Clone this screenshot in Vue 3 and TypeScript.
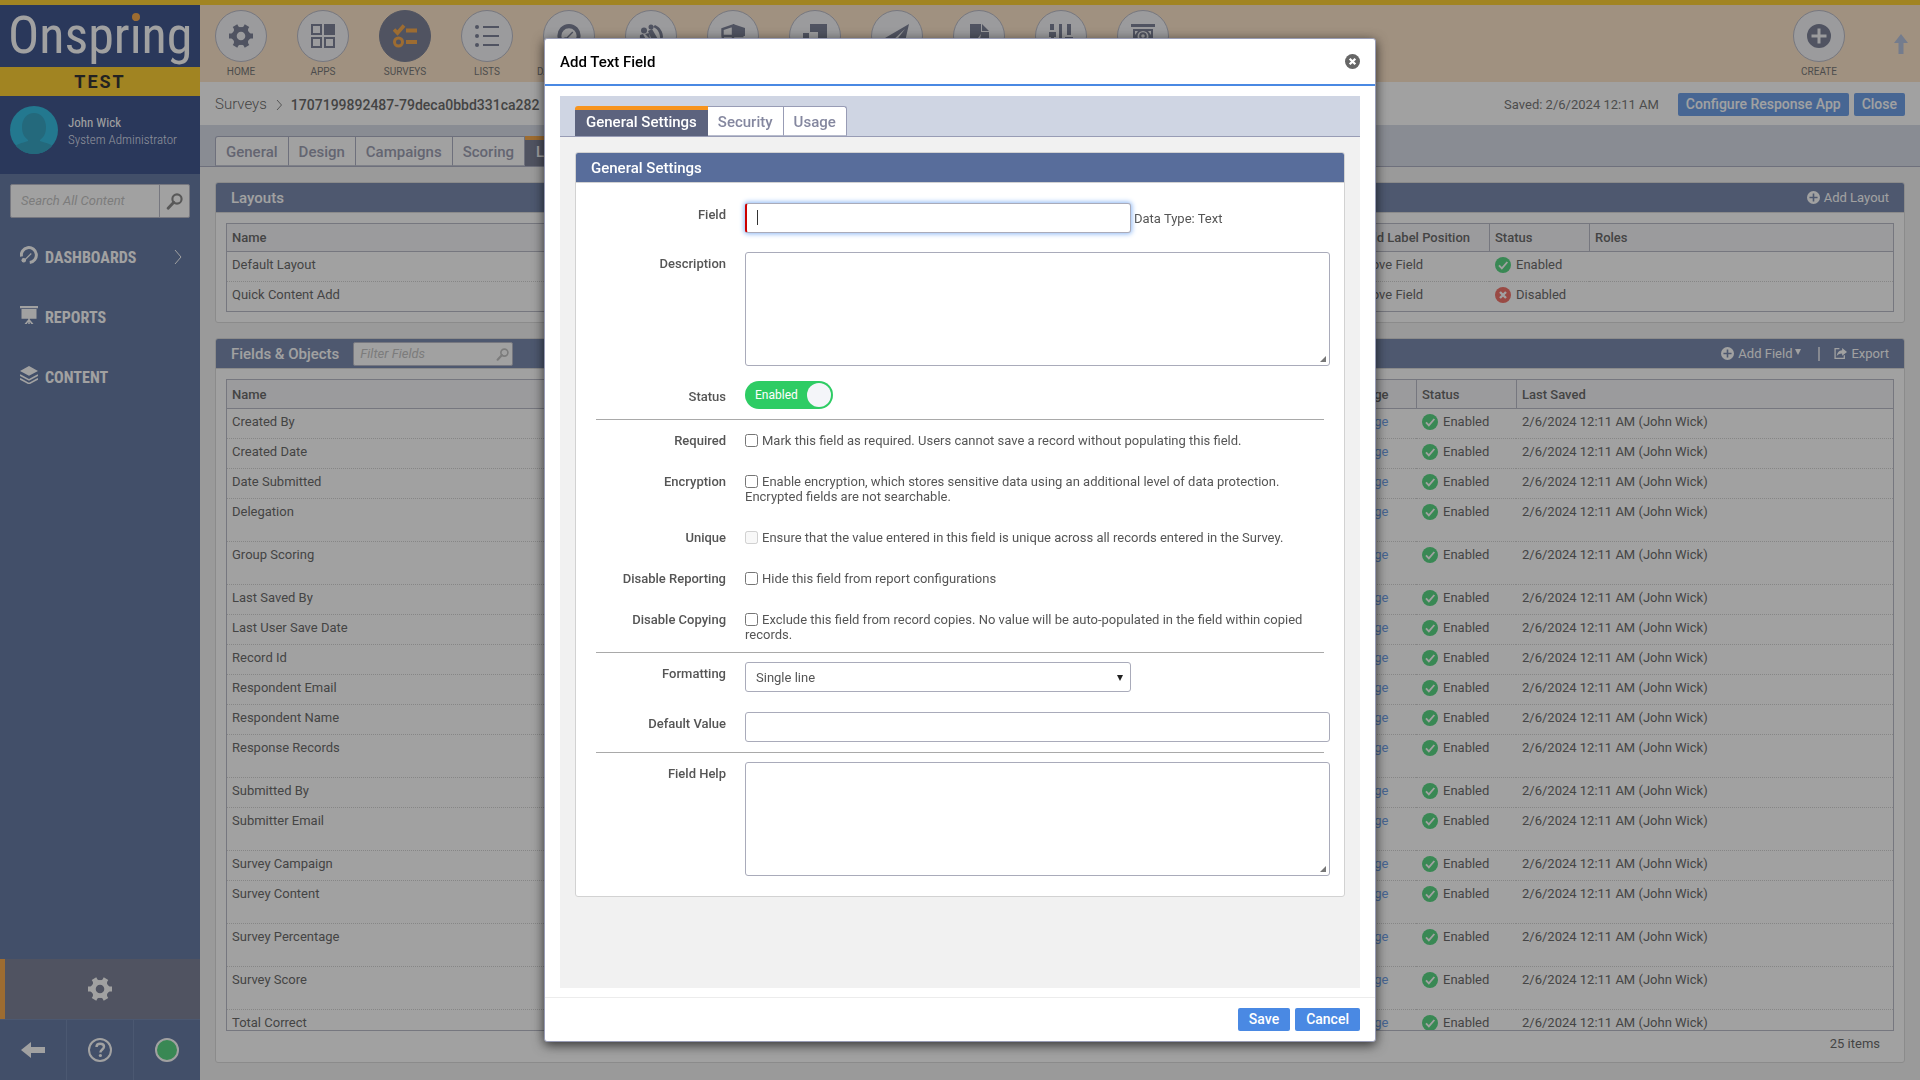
<script setup lang="ts">
import { ref } from 'vue'

interface NavItem { label: string; icon: string; active?: boolean }
interface FieldRow { name: string; tall?: boolean }
interface CheckRow { id: string; label: string; text: string; disabled?: boolean }

const tooth = (deg: number) => `<path transform="rotate(${deg} 12 12)" d="M18.5 7.6 21.6 9.4H24V14.6H21.6L18.5 16.4Z"/>`
const gear = [0, 60, 120, 180, 240, 300].map(tooth).join('') +
  '<circle cx="12" cy="12" r="6.6" fill="none" stroke="currentColor" stroke-width="4.6"/>'
const gauge = '<path d="M5.2 21A11.6 11.6 0 1 1 18.800 21L16.600 18A7.600 7.600 0 1 0 7.400 18Z"/><path d="M9 15 15.800 8" stroke="currentColor" stroke-width="1.400"/><circle cx="8.500" cy="15.500" r="2.200"/>'
const smallGauge = '<path d="M2 14A10 10 0 1 1 13 22" fill="none" stroke="currentColor" stroke-width="4"/><path d="M4 21 15 10" stroke="currentColor" stroke-width="1.600"/><circle cx="5" cy="19" r="3"/>'
const stand = '<path d="M0 0H24V3H0ZM2 4H22V17H13V18L18 24H15L13 21V24H11V21L9 24H6L11 18V17H2Z"/>'
const plus = '<path fill-rule="evenodd" d="M12 0A12 12 0 1 0 12 24A12 12 0 1 0 12 0ZM10.500 4.500H13.500V10.500H19.500V13.500H13.500V19.500H10.500V13.500H4.500V10.500H10.500Z"/>'
const lens = '<circle cx="15.500" cy="8.500" r="6.500" fill="none" stroke="currentColor" stroke-width="3"/><path d="M11 13 3 21.500" stroke="currentColor" stroke-width="4" stroke-linecap="round"/>'
const check = '<circle cx="12" cy="12" r="12"/><path d="M6 12.500 10.300 17 18.500 7.500" fill="none" stroke="#fff" stroke-width="2.800"/>'
const cross = '<circle cx="12" cy="12" r="12"/><path d="M7.500 7.500 16.500 16.500M16.500 7.500 7.500 16.500" stroke="#fff" stroke-width="3.600"/>'

const nav: NavItem[] = [
  { label: 'HOME', icon: gear },
  { label: 'APPS', icon: '<path fill-rule="evenodd" d="M0 0H11V11H0ZM2 2V9H9V2ZM13 0H24V11H13ZM0 13H11V24H0ZM2 15V22H9V15ZM13 13H24V24H13ZM15 15V22H22V15Z"/>' },
  { label: 'SURVEYS', icon: '<path d="M1 5.500 4.500 9 11 1.500" fill="none" stroke="currentColor" stroke-width="3.600"/><path d="M13 4.500H24V8.500H13ZM13 16H24V20H13Z"/><circle cx="5.500" cy="18" r="4" fill="none" stroke="currentColor" stroke-width="3"/>', active: true },
  { label: 'LISTS', icon: '<circle cx="2" cy="3" r="2"/><circle cx="2" cy="12" r="2"/><circle cx="2" cy="21" r="2"/><path d="M8 2H24V4H8ZM8 11H24V13H8ZM8 20H24V22H8Z"/>' },
  { label: 'DASHBOARDS', icon: gauge },
  { label: '', icon: '<circle cx="5" cy="6.500" r="3"/><circle cx="12" cy="3" r="2.500"/><path d="M16 1C21 3 24 8 24 13L21 20C22 11 20 5 14 3ZM9 7 13 5 20 17 17 22 12 14ZM1 11 4 10 11 23C4 22 0 17 1 11ZM6 10 10 9 11 15Z"/>' },
  { label: '', icon: '<path d="M12 0 24 4V12H12V0Z"/><path d="M1.500 12V5L12 1.500V22C6 20 1.500 17 1.500 12ZM1.500 12H22.500" fill="none" stroke="currentColor" stroke-width="2.400"/>' },
  { label: '', icon: '<path d="M7 0H24V17H15V8H7ZM0 9H6V17H13V24H0Z"/>' },
  { label: '', icon: '<path d="M24 0 0 14 7 17 20 5 10 18V24L14 20 19 22Z"/>' },
  { label: '', icon: '<path fill-rule="evenodd" d="M3 0H14V8H22V24H3ZM15 0 22 7H15ZM14 10 8 18H12L10 23 17 15H13Z"/>' },
  { label: '', icon: '<path d="M1 0H5V6H1ZM0 8H7V13H5V24H2V13H0ZM10 0H13V15H10ZM18 0H22V11H18ZM16 13H24V17H22V24H18V17H16Z"/>' },
  { label: '', icon: '<path fill-rule="evenodd" d="M0 0H24V3H0ZM2 5H22V21H2ZM4 7V11L7 7ZM20 7V11L17 7ZM12 7A5.500 5.500 0 1 0 12 18A5.500 5.500 0 1 0 12 7Z"/><circle cx="12" cy="12" r="2.800" fill="none" stroke="currentColor" stroke-width="2"/>' },
]

const menu = [
  { label: 'DASHBOARDS', icon: smallGauge, more: true },
  { label: 'REPORTS', icon: stand, more: false },
  { label: 'CONTENT', icon: '<path d="M12 0 24 6.500 12 13 0 6.500Z"/><path d="M0 12 12 18.500 24 12M0 17 12 23.500 24 17" fill="none" stroke="currentColor" stroke-width="2.200"/>', more: false },
]

const pageTabs = ['General', 'Design', 'Campaigns', 'Scoring', 'Layout']
const layouts = [
  { name: 'Default Layout', on: true },
  { name: 'Quick Content Add', on: false },
]
const fields: FieldRow[] = [
  { name: 'Created By' },
  { name: 'Created Date' },
  { name: 'Date Submitted' },
  { name: 'Delegation', tall: true },
  { name: 'Group Scoring', tall: true },
  { name: 'Last Saved By' },
  { name: 'Last User Save Date' },
  { name: 'Record Id' },
  { name: 'Respondent Email' },
  { name: 'Respondent Name' },
  { name: 'Response Records', tall: true },
  { name: 'Submitted By' },
  { name: 'Submitter Email', tall: true },
  { name: 'Survey Campaign' },
  { name: 'Survey Content', tall: true },
  { name: 'Survey Percentage', tall: true },
  { name: 'Survey Score', tall: true },
  { name: 'Total Correct', tall: true },
]
const checks: CheckRow[] = [
  { id: 'required', label: 'Required', text: 'Mark this field as required. Users cannot save a record without populating this field.' },
  { id: 'encryption', label: 'Encryption', text: 'Enable encryption, which stores sensitive data using an additional level of data protection. Encrypted fields are not searchable.' },
  { id: 'unique', label: 'Unique', text: 'Ensure that the value entered in this field is unique across all records entered in the Survey.', disabled: true },
  { id: 'reporting', label: 'Disable Reporting', text: 'Hide this field from report configurations' },
  { id: 'copying', label: 'Disable Copying', text: 'Exclude this field from record copies. No value will be auto-populated in the field within copied records.' },
]
const modalTabs = ['General Settings', 'Security', 'Usage']
const activeTab = ref('General Settings')
const enabled = ref(true)
</script>

<template>
  <div class="app">
    <div class="strip"></div>
    <div class="shell">
      <aside class="sidebar">
        <div class="logo">Onspr<span class="dot-i">i</span>ng</div>
        <div class="env">TEST</div>
        <div class="user">
          <svg class="avatar" viewBox="0 0 48 48" aria-hidden="true">
            <defs><clipPath id="face"><circle cx="24" cy="24" r="24" /></clipPath></defs>
            <g clip-path="url(#face)">
              <rect width="48" height="48" fill="#02acda" />
              <path fill="#048eb4" d="M24 7c7 0 12 6 12 14 0 6-2 10-6 13v1c6 2 12 3 14 7v8H4v-8c2-4 8-5 14-7v-1c-4-3-6-7-6-13C12 13 17 7 24 7Z" />
            </g>
          </svg>
          <div>
            <div class="user-name">John Wick</div>
            <div class="user-role">System Administrator</div>
          </div>
        </div>
        <div class="search">
          <input type="text" placeholder="Search All Content" aria-label="Search all content" />
          <button type="button" aria-label="Search"><svg viewBox="0 0 24 24" v-html="lens"></svg></button>
        </div>
        <nav class="menu">
          <a v-for="m in menu" :key="m.label" href="#">
            <svg class="menu-icon" viewBox="0 0 24 24" v-html="m.icon"></svg>
            <span>{{ m.label }}</span>
            <svg v-if="m.more" class="chev" viewBox="0 0 8 16"><path d="M1 1 7 8 1 15" /></svg>
          </a>
        </nav>
        <button type="button" class="admin" aria-label="Administration"><svg viewBox="0 0 24 24" v-html="gear"></svg></button>
        <div class="tools">
          <button type="button" aria-label="Collapse"><svg viewBox="0 0 24 24"><path d="M0 12 10 4V9H24V15H10V20Z" /></svg></button>
          <button type="button" aria-label="Help"><svg viewBox="0 0 24 24"><circle cx="12" cy="12" r="11" fill="none" stroke="currentColor" stroke-width="2" /><path d="M8.500 9C8.500 7 10 5.800 12.200 5.800S16 7 16 8.800C16 11.400 12.400 11.600 12.400 14.500" fill="none" stroke="currentColor" stroke-width="2.400" /><circle cx="12.400" cy="17.500" r="1.600" /></svg></button>
          <button type="button" aria-label="Status"><svg viewBox="0 0 24 24"><circle cx="12" cy="12" r="11" fill="#2ecc64" stroke="currentColor" stroke-width="2" /></svg></button>
        </div>
      </aside>

      <div class="main">
        <header class="topnav">
          <a v-for="(n, i) in nav" :key="i" href="#" class="nav-item">
            <span class="circle" :class="{ on: n.active }"><svg viewBox="0 0 24 24" v-html="n.icon"></svg></span>
            <span class="nav-label">{{ n.label }}</span>
          </a>
          <a href="#" class="nav-item create">
            <span class="circle"><svg viewBox="0 0 24 24" v-html="plus"></svg></span>
            <span class="nav-label">CREATE</span>
          </a>
          <svg class="pin" viewBox="0 0 14 20"><path d="M7 0 14 9H9.500V20H4.500V9H0Z" /></svg>
        </header>

        <div class="crumbs">
          <a href="#">Surveys</a>
          <svg class="crumb-sep" viewBox="0 0 6 10"><path d="M1 0 5.500 5 1 10" /></svg>
          <h1>1707199892487-79deca0bbd331ca282</h1>
          <span class="saved">Saved: 2/6/2024 12:11 AM</span>
          <button type="button" class="btn">Configure Response App</button>
          <button type="button" class="btn">Close</button>
        </div>

        <div class="tabbar page-tabs">
          <button v-for="t in pageTabs" :key="t" type="button" :class="{ on: t === 'Layout' }">{{ t }}</button>
        </div>

        <div class="content">
          <section class="panel">
            <div class="panel-head">
              <h2>Layouts</h2>
              <button type="button" class="action push"><svg viewBox="0 0 24 24" v-html="plus"></svg>Add Layout</button>
            </div>
            <div class="panel-body">
              <table class="grid layouts">
                <colgroup><col /><col class="c-label" /><col class="c-status" /><col class="c-roles" /></colgroup>
                <thead><tr><th>Name</th><th>Field Label Position</th><th>Status</th><th>Roles</th></tr></thead>
                <tbody>
                  <tr v-for="l in layouts" :key="l.name">
                    <td>{{ l.name }}</td>
                    <td>Above Field</td>
                    <td><span class="state"><svg :class="l.on ? 'ok' : 'bad'" viewBox="0 0 24 24" v-html="l.on ? check : cross"></svg>{{ l.on ? 'Enabled' : 'Disabled' }}</span></td>
                    <td></td>
                  </tr>
                </tbody>
              </table>
            </div>
          </section>

          <section class="panel grow">
            <div class="panel-head">
              <h2>Fields &amp; Objects</h2>
              <label class="filter">
                <input type="text" placeholder="Filter Fields" aria-label="Filter fields" />
                <svg viewBox="0 0 24 24" v-html="lens"></svg>
              </label>
              <button type="button" class="action push"><svg viewBox="0 0 24 24" v-html="plus"></svg>Add Field<svg class="caret-down" viewBox="0 0 6 6"><path d="M0 0H6L3 6Z" /></svg></button>
              <span class="bar"></span>
              <button type="button" class="action"><svg viewBox="0 0 24 24"><path d="M10 3H2V21H19V15" fill="none" stroke="currentColor" stroke-width="2.400" /><path d="M15 2 24 9 15 16V12C10 12 7 14 5 17 6 10 9 7 15 6Z" /></svg>Export</button>
            </div>
            <div class="panel-body fill">
              <div class="scroller">
                <table class="grid fields">
                  <colgroup><col /><col class="c-usage" /><col class="c-fstatus" /><col class="c-saved" /></colgroup>
                  <thead><tr><th>Name</th><th>Usage</th><th>Status</th><th>Last Saved</th></tr></thead>
                  <tbody>
                    <tr v-for="f in fields" :key="f.name" :class="{ tall: f.tall }">
                      <td>{{ f.name }}</td>
                      <td><a href="#">Usage</a></td>
                      <td><span class="state"><svg class="ok" viewBox="0 0 24 24" v-html="check"></svg>Enabled</span></td>
                      <td>2/6/2024 12:11 AM (John Wick)</td>
                    </tr>
                  </tbody>
                </table>
              </div>
              <div class="count">25 items</div>
            </div>
          </section>
        </div>
      </div>
    </div>

    <div class="overlay">
      <div class="modal" role="dialog" aria-labelledby="dlg-title">
        <div class="modal-head">
          <h2 id="dlg-title">Add Text Field</h2>
          <button type="button" class="x" aria-label="Close dialog"><svg viewBox="0 0 24 24" v-html="cross"></svg></button>
        </div>
        <div class="modal-body">
          <div class="tabbar">
            <button v-for="t in modalTabs" :key="t" type="button" :class="{ on: t === activeTab }" @click="activeTab = t">{{ t }}</button>
          </div>
          <section class="panel form">
            <div class="panel-head"><h2>General Settings</h2></div>
            <div class="group first">
              <div class="row">
                <label class="name" for="field">Field</label>
                <div class="control inline">
                  <span class="focus-wrap half"><input id="field" class="text req" type="text" /><span class="caret"></span></span>
                  <span class="hint">Data Type: Text</span>
                </div>
              </div>
              <div class="row">
                <label class="name" for="desc">Description</label>
                <div class="control area"><textarea id="desc"></textarea><svg class="grip" viewBox="0 0 6 6"><path d="M6 0V6H0Z" /></svg></div>
              </div>
              <div class="row snug">
                <label class="name mid" for="status">Status</label>
                <div class="control">
                  <label class="toggle"><input id="status" v-model="enabled" type="checkbox" /><span>Enabled</span><i></i></label>
                </div>
              </div>
            </div>
            <hr />
            <div class="group checks">
              <div v-for="c in checks" :key="c.id" class="row">
                <label class="name flat" :for="c.id">{{ c.label }}</label>
                <div class="control"><input :id="c.id" class="box" type="checkbox" :disabled="c.disabled" />{{ c.text }}</div>
              </div>
            </div>
            <hr />
            <div class="group">
              <div class="row">
                <label class="name" for="fmt">Formatting</label>
                <div class="control">
                  <span class="select half"><select id="fmt"><option>Single line</option></select><svg viewBox="0 0 6 6"><path d="M0 0H6L3 6Z" /></svg></span>
                </div>
              </div>
              <div class="row">
                <label class="name" for="def">Default Value</label>
                <div class="control"><input id="def" class="text" type="text" /></div>
              </div>
            </div>
            <hr />
            <div class="group last">
              <div class="row">
                <label class="name" for="help">Field Help</label>
                <div class="control area"><textarea id="help"></textarea><svg class="grip" viewBox="0 0 6 6"><path d="M6 0V6H0Z" /></svg></div>
              </div>
            </div>
          </section>
        </div>
        <div class="modal-foot">
          <button type="button" class="btn">Save</button>
          <button type="button" class="btn">Cancel</button>
        </div>
      </div>
    </div>
  </div>
</template>

<style>
body { background: #f1f1f1; }
</style>

<style scoped>
.app, .app * { box-sizing: border-box; }
.app { height: 100vh; display: flex; flex-direction: column; overflow: hidden; font: 13px/15px Roboto, sans-serif; color: #444; }
button, input, textarea, select { font: inherit; color: inherit; margin: 0; }
button { border: 0; background: none; padding: 0; cursor: pointer; }
a { color: inherit; text-decoration: none; }
h1, h2 { margin: 0; font-size: 15px; font-weight: 500; line-height: 18px; }
svg { display: block; fill: currentColor; }

.strip { height: 5px; background: #ffc400; flex: none; }
.shell { flex: 1; min-height: 0; display: flex; }

.sidebar { width: 200px; flex: none; display: flex; flex-direction: column; background: #405a8e; color: #fff; font-family: 'Roboto Condensed', Roboto, sans-serif; }
.logo { height: 62px; padding-left: 8px; background: #102c72; font-size: 52px; line-height: 62px; }
.dot-i { position: relative; }
.dot-i::before { content: ''; position: absolute; left: 2px; top: 8px; width: 8px; height: 8px; border-radius: 50%; background: #f7941e; }
.env { height: 29px; background: #ffc400; color: #000; font: 700 18px/29px Roboto, sans-serif; letter-spacing: 2px; text-align: center; }
.user { height: 78px; padding: 10px; background: #102c72; display: flex; gap: 10px; }
.avatar { width: 48px; height: 48px; }
.user-name { margin-top: 8px; line-height: 17px; }
.user-role { line-height: 17px; font-weight: 300; color: #d8dfee; }
.search { height: 34px; margin: 10px 10px 9px; display: flex; background: #fff; border: 1px solid #a9abba; border-radius: 2px; }
.search input { flex: 1; min-width: 0; border: 0; background: none; padding: 0 10px; font: italic 400 13px/16px Roboto, sans-serif; outline: 0; }
input::placeholder { color: #b4b4b4; opacity: 1; font-style: italic; }
.search button { width: 30px; border-left: 1px solid #a9abba; display: grid; place-items: center; color: #6d6d6d; }
.search svg { width: 17px; height: 17px; }
.menu a { height: 60px; padding: 0 18px 0 20px; display: flex; align-items: center; gap: 7px; font-size: 16px; font-weight: 700; }
.menu-icon { width: 18px; height: 18px; margin-bottom: 4px; }
.menu .chev { width: 8px; height: 16px; margin-left: auto; fill: none; stroke: currentColor; }
.admin { height: 60px; margin-top: auto; border-left: 5px solid #f7941e; padding-right: 5px; background: #5c637e; display: grid; place-items: center; }
.sidebar .admin svg, .tools svg { width: 24px; height: 24px; }
.tools { height: 61px; display: flex; border-top: 1px solid #526d9f; }
.tools button { flex: 1; display: grid; place-items: center; }
.tools button + button { border-left: 1px solid #526d9f; }

.main { flex: 1; min-width: 0; display: flex; flex-direction: column; background: #f1f1f1; }
.topnav { height: 77px; flex: none; display: flex; gap: 30px; padding: 5px 12px 0 15px; background: #fcdebc; }
.nav-item { width: 52px; display: flex; flex-direction: column; align-items: center; }
.circle { width: 52px; height: 52px; flex: none; border-radius: 50%; border: 1px solid #a9abba; background: #f2f2f6; color: #5c637e; display: grid; place-items: center; }
.circle.on { background: #5c637e; border-color: #5c637e; color: #f7941e; }
.circle svg { width: 24px; height: 24px; }
.nav-label { font-size: 10px; line-height: 20px; color: #555; }
.create { margin-left: auto; }
.pin { width: 14px; height: 20px; margin: 24px 0 0 19px; color: #a4b4d6; }
.crumbs { height: 43px; flex: none; display: flex; align-items: center; padding: 2px 15px 0; background: #fff; font-size: 14px; }
.crumbs > a { font-size: 15px; font-weight: 300; }
.crumb-sep { width: 6px; height: 10px; margin: 0 9px; fill: none; stroke: #666; }
.crumbs h1 { font-size: 14px; }
.saved { margin-left: auto; margin-right: 19px; font-size: 13px; color: #555; }
.btn { height: 23px; padding: 0 11px; border-radius: 2px; background: #4a89e3; color: #fff; font-size: 14px; font-weight: 500; }
.btn + .btn { margin-left: 5px; }
.crumbs .btn { padding: 0 8px; }

.tabbar { flex: none; display: flex; padding: 10px 15px 0; background: #cfd5e3; border-bottom: 1px solid #989cb5; }
.tabbar button { height: 30px; padding: 3px 10px 0; background: #fff; border: 1px solid #989cb5; border-left-width: 0; border-bottom-color: #b8bccd; color: #84879f; font-size: 15px; font-weight: 500; }
.tabbar button:first-child { border-left-width: 1px; border-top-left-radius: 3px; }
.tabbar button:last-child { border-top-right-radius: 3px; }
.tabbar button.on { background: #5c637e; color: #fff; border: 0; border-top: 4px solid #f7941e; padding: 0 11px 1px; }
.page-tabs { padding-top: 11px; }

.content { flex: 1; min-height: 0; display: flex; flex-direction: column; gap: 15px; padding: 15px 15px 17px; }
.panel { background: #fff; border: 1px solid #d2d2d2; border-radius: 3px; }
.panel-head { height: 30px; padding: 0 15px; display: flex; align-items: center; background: #586d9b; color: #fff; border-bottom: 1px solid #d2d2d2; border-radius: 2px 2px 0 0; }
.panel-body { padding: 10px; }
.push { margin-left: auto; }
.action { display: flex; align-items: center; gap: 4px; }
.action svg { width: 13px; height: 13px; }
.action .caret-down { width: 6px; height: 6px; margin: 0 0 3px -1px; }
.bar { width: 2px; height: 14px; margin: 0 14px 0 17px; background: #c8cede; }
.filter { position: relative; margin-left: 14px; }
.filter input { display: block; width: 160px; height: 24px; padding: 0 6px; background: #fff; border: 1px solid #a9abba; border-radius: 2px; font-style: italic; outline: 0; }
.filter svg { position: absolute; right: 4px; top: 6px; width: 13px; height: 13px; color: #b4b4b4; }
.grow { flex: 1; min-height: 0; display: flex; flex-direction: column; }
.fill { flex: 1; min-height: 0; display: flex; flex-direction: column; }
.scroller { flex: 1; min-height: 0; overflow: hidden; border: 1px solid #a9abba; }
.count { padding: 5px 14px 0 0; text-align: right; font-size: 13px; line-height: 16px; }
.grid { width: 100%; table-layout: fixed; border-collapse: separate; border-spacing: 0; }
.layouts { border: 1px solid #a9abba; }
.layouts .c-label { width: 139px; }
.layouts .c-status { width: 100px; }
.layouts .c-roles { width: 304px; }
.c-usage { width: 70px; }
.c-fstatus { width: 100px; }
.c-saved { width: 377px; }
.grid th { height: 28px; padding: 0 5px; text-align: left; font-weight: 500; background: #f2f2f6; border-bottom: 1px solid #a9abba; }
.grid.fields th { height: 29px; }
.grid th + th { border-left: 1px solid #a9abba; }
.grid td { height: 30px; padding: 5px 6px 0; vertical-align: top; border-bottom: 1px dotted #c8c8c8; }
.grid td:first-child { padding-left: 5px; }
.grid .tall td { height: 43px; }
.layouts tr:last-child td { border-bottom: 0; height: 29px; }
.grid a { color: #4a89e3; }
.state { display: flex; align-items: center; gap: 5px; line-height: 16px; }
.state svg { width: 16px; height: 16px; }
.ok { color: #2ecc64; }
.bad { color: #ef5044; }

.overlay { position: fixed; inset: 0; background: rgba(68, 68, 68, 0.5); display: flex; justify-content: center; padding: 38px 16px; }
.modal { width: 832px; display: flex; flex-direction: column; background: #fff; border: 1px solid #989cb5; border-radius: 3px; box-shadow: 0 3px 12px rgba(0, 0, 0, 0.7); color: #555; }
.modal-head { height: 47px; flex: none; padding: 0 15px; display: flex; align-items: center; justify-content: space-between; border-bottom: 2px solid #4a89e3; color: #000; }
.x { color: #666; }
.x svg { width: 15px; height: 15px; }
.modal-body { flex: 1; min-height: 0; margin: 10px 15px 9px; background: #f1f1f1; overflow: hidden; }
.modal-foot { height: 44px; flex: none; display: flex; justify-content: flex-end; align-items: center; padding: 0 15px; border-top: 1px solid #ececec; }
.form { margin: 15px; }
.group { padding: 9px 14px 10px 15px; display: flex; flex-direction: column; gap: 20px; }
.first { padding-top: 20px; gap: 19px; }
.checks { padding-top: 13px; gap: 26px; }
.last { padding-bottom: 20px; }
.row { display: flex; gap: 19px; }
.snug { margin-top: -4px; }
.name { width: 135px; flex: none; padding-top: 4px; text-align: right; font-weight: 500; }
.name.flat { padding-top: 0; }
.name.mid { padding-top: 8px; }
.control { flex: 1; min-width: 0; position: relative; }
.inline { display: flex; align-items: center; gap: 3px; }
.half { width: 386px; }
.text, textarea, select { display: block; width: 100%; height: 30px; padding: 0 10px; background: #fff; border: 1px solid #a9abba; border-radius: 3px; outline: 0; }
textarea { height: 114px; resize: none; }
.focus-wrap { position: relative; }
.req { border-left: 2px solid #cc0000; box-shadow: 0 0 5px 1px #8db8f5; }
.caret { position: absolute; left: 12px; top: 7px; width: 1px; height: 15px; background: #333; }
.grip { position: absolute; right: 4px; bottom: 4px; width: 6px; height: 6px; color: #777; }
.toggle { width: 88px; height: 28px; padding: 0 2px 0 10px; display: flex; align-items: center; justify-content: space-between; background: #2ecc64; border-radius: 14px; color: #fff; font-size: 12px; }
.toggle input { position: absolute; opacity: 0; }
.toggle i { width: 24px; height: 24px; border-radius: 50%; background: #f4f5f9; }
hr { height: 1px; margin: 0 20px; border: 0; background: #a9a9a9; }
.box { width: 13px; height: 13px; margin: 0 4px 0 0; vertical-align: -2px; }
.select { position: relative; display: block; }
select { appearance: none; }
.select svg { position: absolute; right: 8px; top: 13px; width: 6px; height: 6px; color: #222; }
</style>
